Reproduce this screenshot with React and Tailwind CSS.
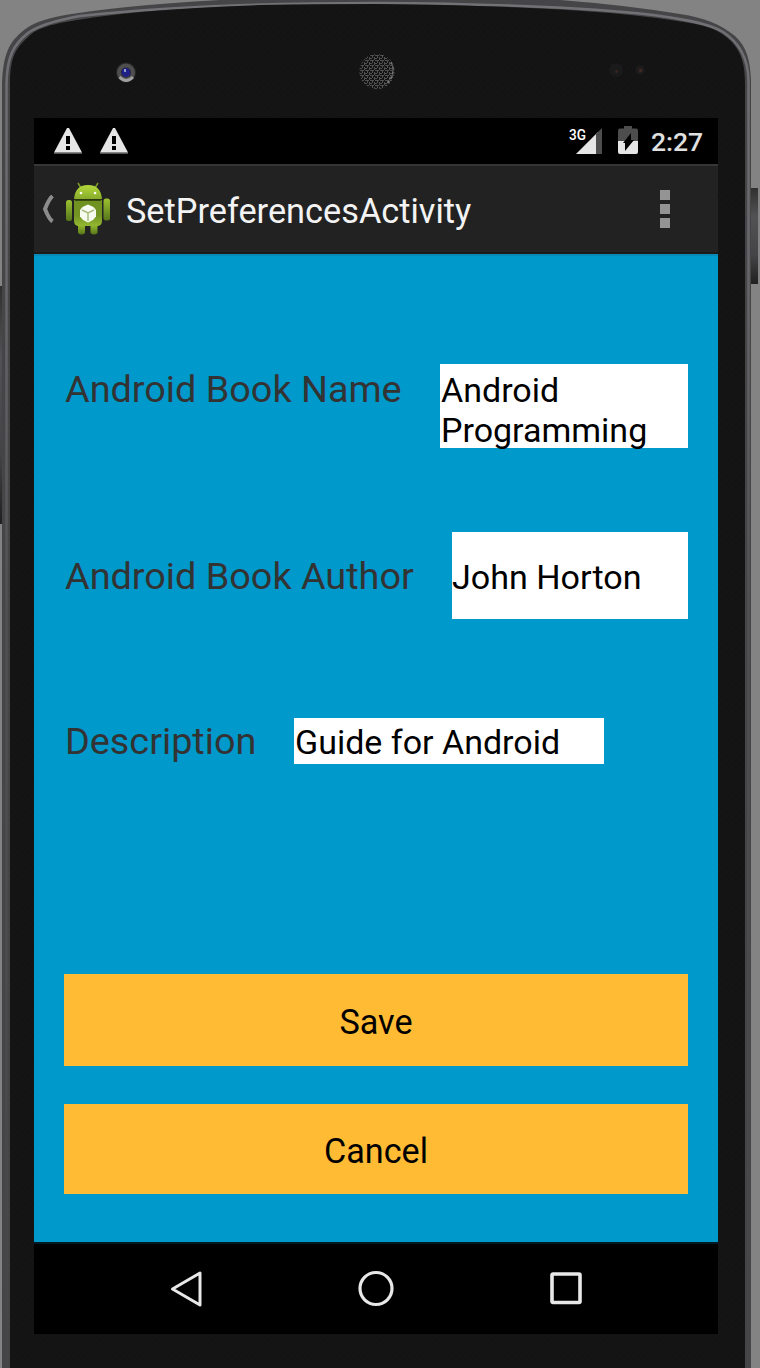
import React from "react";

function PhoneBody() {
  return (
    <svg className="absolute inset-0" width="760" height="1368" viewBox="0 0 760 1368" aria-hidden="true">
      <defs>
        <linearGradient id="side" x1="0" y1="0" x2="0" y2="1">
          <stop offset="0" stopColor="#303030" />
          <stop offset=".3" stopColor="#525254" />
          <stop offset=".7" stopColor="#444446" />
          <stop offset="1" stopColor="#202020" />
        </linearGradient>
        <linearGradient id="rim" x1="0" y1="0" x2="0" y2="1368" gradientUnits="userSpaceOnUse">
          <stop offset="0" stopColor="#727276" />
          <stop offset=".2" stopColor="#67676b" />
          <stop offset=".45" stopColor="#505053" />
          <stop offset="1" stopColor="#464648" />
        </linearGradient>
        <pattern id="mesh" width="5" height="5" patternUnits="userSpaceOnUse">
          <rect width="5" height="5" fill="#141414" />
          <path d="M0 .5h4M2.5 0v3M0 3.5h2M4.5 2v3" stroke="#505050" strokeWidth="1" />
        </pattern>
        <pattern id="grain" width="7" height="7" patternUnits="userSpaceOnUse">
          <rect width="7" height="7" fill="#141414" />
          <path d="M1 1h1v1h-1zM4 3h2v1h-2zM2 5h1v1h-1z" fill="#161616" />
          <path d="M3 1h1v1h-1zM0 4h2v1h-2zM5 6h1v1h-1z" fill="#121212" />
        </pattern>
      </defs>
      <rect width="760" height="1368" fill="#838383" />
      <rect x="0" y="286" width="4" height="238" fill="url(#side)" />
      <rect x="751" y="188" width="7" height="96" fill="url(#side)" />
      <path d="M2 1368V85C3 54 9 42 24 30C33 23 45 19 60 16Q115 6 220 0H560Q625 5 680 14C705 18 720 24 735 36C747 47 750 60 751 80V1368Z" fill="#454547" />
      <path d="M6.500 1368V84C7 57 13 45 28 33C39 25 58 20 80 16Q200 3 376 3Q540 4 640 13.500C680 18 708 23 723 32C740 43 748 60 748.500 80V1368" fill="none" stroke="url(#rim)" strokeWidth="2.500" />
      <path d="M10 1368V84C10 58 15 49 28 37C36 29 47 26 60 23Q130 9 260 5Q320 4 376 4Q510 5 610 13Q655 17 690 23C712 27 720 31 731 41C742 53 745 65 745 84V1368Z" fill="url(#grain)" />
      <circle cx="126" cy="72.500" r="10" fill="#292929" />
      <circle cx="126" cy="72.500" r="7" fill="none" stroke="#4e4e4e" strokeWidth="4" />
      <path d="M119.500 77Q126 84 133 77" fill="none" stroke="#a0a0a0" strokeWidth="3" />
      <circle cx="126" cy="72.500" r="4.500" fill="#202085" />
      <rect x="124" y="69" width="2" height="3" fill="#8ba0d0" />
      <circle cx="377" cy="71.500" r="17.500" fill="url(#mesh)" />
      <path d="M391 62Q397 73 386 85" fill="none" stroke="#777" strokeWidth="1.500" strokeDasharray="3 2" />
      <circle cx="616" cy="70" r="7" fill="#1b1a1a" />
      <circle cx="616.500" cy="71.500" r="1.500" fill="#3a2520" />
      <circle cx="640" cy="70" r="4.500" fill="#1e1c1c" />
      <circle cx="640.500" cy="70.500" r="1.500" fill="#432a22" />
    </svg>
  );
}

function Warning() {
  return (
    <svg width="28" height="26" viewBox="0 0 28 26">
      <path d="M0 25.300h28" stroke="#555" strokeWidth="1.500" />
      <path d="M13 0h2L28 24.500H0Z" fill="#e6e6e6" />
      <path d="M12 8h4v8h-4zM12 18h4v4h-4z" fill="#000" />
    </svg>
  );
}

function Robot() {
  return (
    <svg width="46" height="54" viewBox="0 0 46 54">
      <defs>
        <linearGradient id="head" x1="0" y1="0" x2="0" y2="1">
          <stop offset="0" stopColor="#b5da3c" />
          <stop offset="1" stopColor="#86ab29" />
        </linearGradient>
        <linearGradient id="limb" x1="0" y1="0" x2="0" y2="1">
          <stop offset="0" stopColor="#9cc231" />
          <stop offset="1" stopColor="#56751a" />
        </linearGradient>
        <linearGradient id="torso" x1="0" y1="0" x2="0" y2="1">
          <stop offset="0" stopColor="#6f9120" />
          <stop offset=".6" stopColor="#739422" />
          <stop offset="1" stopColor="#94b832" />
        </linearGradient>
      </defs>
      <path d="M13 1l3 5M33 1l-3 5" stroke="#7d9b2b" strokeWidth="1.500" />
      <rect x="1" y="18" width="6" height="21" rx="2.500" fill="url(#limb)" />
      <rect x="38.500" y="16.500" width="6.500" height="22" rx="2.500" fill="url(#limb)" />
      <path d="M13 42h7v9q-3.500 3-7 0ZM25.500 42h7v9q-3.500 3-7 0Z" fill="url(#limb)" />
      <path d="M9 17C10 7 15 3 23 3s13 4 14 14Z" fill="url(#head)" />
      <path d="M9 18h28v21q0 5-5 5H14q-5 0-5-5Z" fill="url(#torso)" />
      <path d="M10 18h26" stroke="#2d3d0c" strokeWidth="1.700" />
      <circle cx="16" cy="11" r="1.300" fill="#fff" />
      <circle cx="30" cy="11" r="1.300" fill="#fff" />
      <path d="M23 22.500l5.500 2.500 2.500 3v6.500l-3 3.500-5 2.500-5-2.500-3-3.500V28l2.500-3Z" fill="#f7faef" />
      <path d="M17 28l6 3 6-3M23 31v8" fill="none" stroke="#a9bd80" strokeWidth="1.500" />
    </svg>
  );
}

function StatusBar() {
  return (
    <div className="flex h-[46px] items-start bg-black pl-5 pt-[10px]">
      <div className="flex gap-[18px]">
        <Warning />
        <Warning />
      </div>
      <svg className="-mt-[8px] ml-[432px] shrink-0" width="44" height="36" viewBox="-8 -8 44 36">
        <path d="M30 4v22H8Z" fill="#e6e6e6" />
        <path d="M28 6l6-6v26h-6Z" fill="#4d4d4d" />
        <text x="1" y="11.500" fill="#fff" fontFamily="Roboto, sans-serif" fontWeight="500" fontSize="15.500" textLength="17" lengthAdjust="spacingAndGlyphs">3G</text>
      </svg>
      <svg className="-mt-[2px] ml-[14px] shrink-0" width="20" height="28" viewBox="0 0 20 28">
        <path d="M6 0h8v2.500h4q2 0 2 2V16H0V4.500q0-2 2-2h4Z" fill="#4d4d4d" />
        <path d="M0 15h20v11q0 2-2 2H2q-2 0-2-2Z" fill="#e6e6e6" />
        <path d="M13 7v7h3L7 25v-8H5Z" fill="#000" />
      </svg>
      <span className="-mt-[3px] ml-[13px] text-[26.500px] font-medium leading-[34px] text-[#e0e0e0]">2:27</span>
    </div>
  );
}

function ActionBar() {
  return (
    <header className="flex h-[90px] items-center border-t-2 border-b-2 border-t-[#363636] border-b-[#1b1b1b] bg-[#222] pl-2">
      <svg width="14" height="28" viewBox="0 0 14 28">
        <path d="M10.500 1Q7 4 3 14q4 10 7.500 12.500" fill="none" stroke="#8c8c8c" strokeWidth="4" />
      </svg>
      <div className="ml-[9px]">
        <Robot />
      </div>
      <h1 className="ml-[15px] mt-[4px] w-[346px] whitespace-nowrap text-[34.300px] font-normal leading-10 text-[#f3f3f3]">SetPreferencesActivity</h1>
      <div className="ml-[188px] flex flex-col gap-1">
        <i className="size-[10px] bg-[#949494]" />
        <i className="size-[10px] bg-[#949494]" />
        <i className="size-[10px] bg-[#949494]" />
      </div>
    </header>
  );
}

export default function App() {
  return (
    <div className="relative h-[1368px] w-[760px] overflow-hidden bg-[#838383] pl-[34px] pt-[118px] font-['Roboto',sans-serif]">
      <PhoneBody />
      <div className="relative flex h-[1216px] w-[684px] flex-col bg-black">
        <StatusBar />
        <ActionBar />
        <main className="flex h-[988px] flex-col border-t-2 border-[#078ab8] bg-[#0099cc] px-[30px] pt-[108px] text-black">
          <div className="flex h-[84px] justify-between">
            <label className="ml-[1px] whitespace-nowrap text-[37.800px] leading-[50px] text-[#333]">Android Book Name</label>
            <div className="w-[248px] bg-white pl-[1px] pt-[6px] text-[34px] leading-10">Android Programming</div>
          </div>
          <div className="mt-[84px] flex h-[87px] items-center justify-between">
            <label className="ml-[1px] whitespace-nowrap text-[37.800px] leading-[50px] text-[#333]">Android Book Author</label>
            <div className="flex h-full w-[236px] items-center whitespace-nowrap bg-white pt-[3px] text-[34.100px] leading-10">John Horton</div>
          </div>
          <div className="mt-[99px] flex h-[46px] items-center">
            <label className="ml-[1px] w-[229px] whitespace-nowrap text-[37.800px] leading-[50px] text-[#333]">Description</label>
            <div className="h-full w-[310px] whitespace-nowrap bg-white pl-[1px] pt-[4px] text-[34px] leading-10">Guide for Android</div>
          </div>
          <button className="mt-[210px] h-[92px] shrink-0 bg-[#ffbb33] pt-[6px] text-[34.200px]">Save</button>
          <button className="mt-[38px] h-[90px] shrink-0 bg-[#ffbb33] pt-[6px] text-[34.200px]">Cancel</button>
        </main>
        <nav className="flex h-[92px] items-center justify-between border-t-2 border-[#001b24] pl-[134px] pr-[134px]">
          <svg width="36" height="40" viewBox="0 0 36 40">
            <path d="M32 4v32L4.500 20Z" fill="none" stroke="#e8e8e8" strokeWidth="3" strokeLinejoin="round" />
          </svg>
          <svg width="38" height="40" viewBox="0 0 38 40">
            <circle cx="19" cy="19.500" r="16" fill="none" stroke="#e8e8e8" strokeWidth="3.200" />
          </svg>
          <svg width="36" height="40" viewBox="0 0 36 40">
            <rect x="4" y="5" width="28" height="28.500" rx="1" fill="none" stroke="#e8e8e8" strokeWidth="3.600" />
          </svg>
        </nav>
      </div>
    </div>
  );
}
